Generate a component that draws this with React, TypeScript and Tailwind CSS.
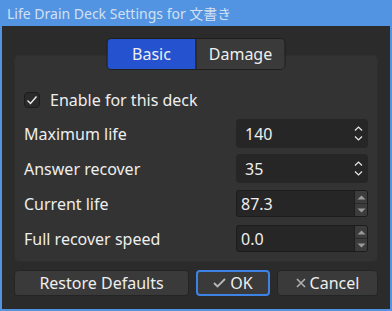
import React, { useState } from 'react';

function Chevrons() {
  return (
    <div className="flex flex-col items-center justify-center gap-[5px] pr-[5px]">
      <svg width="9" height="5" viewBox="0 0 9 5">
        <path d="M1 4.5 L4.5 1 L8 4.5" fill="none" stroke="#e8e8e8" strokeWidth="1.2" />
      </svg>
      <svg width="9" height="5" viewBox="0 0 9 5">
        <path d="M1 0.5 L4.5 4 L8 0.5" fill="none" stroke="#e8e8e8" strokeWidth="1.2" />
      </svg>
    </div>
  );
}

function Arrows() {
  return (
    <div className="flex w-[13px] flex-col border-l border-[#1e1e1e] bg-[#3c3c3c]">
      <div className="flex flex-1 items-center justify-center border-b border-[#2a2a2a]">
        <svg width="9" height="5" viewBox="0 0 9 5">
          <path d="M0.5 4.5 L4.5 0.5 L8.5 4.5 Z" fill="#9a9a9a" />
        </svg>
      </div>
      <div className="flex flex-1 items-center justify-center">
        <svg width="9" height="5" viewBox="0 0 9 5">
          <path d="M0.5 0.5 L4.5 4.5 L8.5 0.5 Z" fill="#9a9a9a" />
        </svg>
      </div>
    </div>
  );
}

interface RowProps {
  label: string;
  value: string;
  kind: 'chevron' | 'arrow';
}

function SpinRow({ label, value, kind }: RowProps) {
  return (
    <div className="flex items-center justify-between">
      <span>{label}</span>
      {kind === 'chevron' ? (
        <div className="flex h-[29px] w-[132px] items-center justify-between rounded-[4px] bg-[#262626] pl-[9px]">
          <span>{value}</span>
          <Chevrons />
        </div>
      ) : (
        <div className="flex h-[27px] w-[132px] overflow-hidden rounded-[3px] border border-[#1c1c1c] bg-[#262626]">
          <span className="flex flex-1 items-center pl-[4px]">{value}</span>
          <Arrows />
        </div>
      )}
    </div>
  );
}

export default function App() {
  const [enabled, setEnabled] = useState(true);
  const [tab, setTab] = useState('basic');

  return (
    <div
      className="flex h-[311px] w-[392px] flex-col bg-[#5294e2] text-[16px] text-[#eeeeee]"
      style={{ fontFamily: '"Noto Sans", "Noto Sans CJK JP", sans-serif' }}
    >
      <div className="flex h-[26px] items-center pl-[7px] text-[14px] text-[#d3e0f2]">
        Life Drain Deck Settings for 文書き
      </div>
      <div className="mx-[2px] mb-[2px] flex flex-1 flex-col bg-[#2b2b2b] px-[12px] pt-[12px]">
        <div className="relative">
          <div className="absolute left-1/2 top-0 z-10 flex -translate-x-1/2 overflow-hidden rounded-[5px] border border-[#1e1e1e]">
            <button
              onClick={() => setTab('basic')}
              className={`h-[30px] w-[88px] ${tab === 'basic' ? 'bg-[#2553d0]' : 'bg-[#3a3a3a]'}`}
            >
              Basic
            </button>
            <button
              onClick={() => setTab('damage')}
              className={`h-[30px] w-[89px] border-l border-[#1e1e1e] ${tab === 'damage' ? 'bg-[#2553d0]' : 'bg-[#3a3a3a]'}`}
            >
              Damage
            </button>
          </div>
          <div className="mt-[17px] flex h-[207px] flex-col rounded-[5px] border border-[#2f2f2f] bg-[#333333] px-[9px] pt-[35px]">
            <label className="flex h-[18px] cursor-pointer items-center gap-[10px]">
              <span
                onClick={() => setEnabled(!enabled)}
                className="flex h-[16px] w-[16px] items-center justify-center rounded-[4px] border border-[#1c1c1c] bg-[#2a2a2a]"
              >
                {enabled && (
                  <svg width="12" height="10" viewBox="0 0 12 10">
                    <path d="M1.5 5.5 L4.5 8.5 L10.5 1.5" fill="none" stroke="#eeeeee" strokeWidth="1.4" />
                  </svg>
                )}
              </span>
              <span>Enable for this deck</span>
            </label>
            <div className="mt-[10px] flex flex-col gap-[6px]">
              <SpinRow label="Maximum life" value="140" kind="chevron" />
              <SpinRow label="Answer recover" value="35" kind="chevron" />
              <div className="flex flex-col gap-[8px] pt-[1px]">
                <SpinRow label="Current life" value="87.3" kind="arrow" />
                <SpinRow label="Full recover speed" value="0.0" kind="arrow" />
              </div>
            </div>
          </div>
        </div>
        <div className="mt-[8px] flex gap-[7px]">
          <button className="h-[26px] w-[175px] rounded-[4px] border border-[#242424] bg-[#3a3a3a]">
            Restore Defaults
          </button>
          <button className="flex h-[26px] w-[74px] items-center justify-center gap-[4px] rounded-[4px] border-2 border-[#3d83e6] bg-[#3a3a3a]">
            <svg width="13" height="10" viewBox="0 0 13 10">
              <path d="M1 5 L4.5 8.5 L12 1" fill="none" stroke="#b8b8b8" strokeWidth="1.8" />
            </svg>
            OK
          </button>
          <button className="flex h-[26px] flex-1 items-center justify-center gap-[4px] rounded-[4px] border border-[#242424] bg-[#3a3a3a]">
            <svg width="10" height="10" viewBox="0 0 10 10">
              <path d="M1 1 L9 9 M9 1 L1 9" fill="none" stroke="#b0b0b0" strokeWidth="1.6" />
            </svg>
            Cancel
          </button>
        </div>
      </div>
    </div>
  );
}
